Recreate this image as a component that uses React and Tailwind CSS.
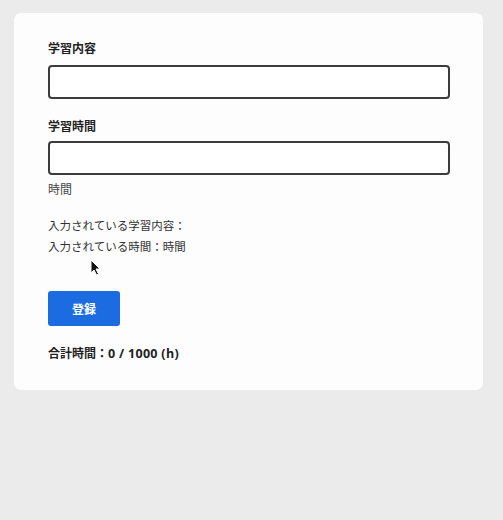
import React, { useState } from 'react';

const FONT = "font-['Noto_Sans_CJK_JP','Noto_Sans',sans-serif]";

function Cursor() {
    return (
        <svg className="absolute left-[90px] top-[259px]" width="12" height="17" viewBox="0 0 12 17">
            <path d="M1 1 L1 14 L4 11 L6.5 16 L8.5 15 L6 10 L10 10 Z" fill="#111" stroke="#fff" strokeWidth="1" />
        </svg>
    );
}

export default function App() {
    const [content, setContent] = useState('');
    const [time, setTime] = useState('');
    const [total] = useState(0);

    return (
        <div className={`relative min-h-[520px] bg-[#ebebeb] pl-[14px] pt-[13px] pr-[20px] ${FONT}`}>
            <div className="w-[469px] rounded-[7px] bg-[#fdfdfd] pl-[34px] pr-[33px] pt-[26px] pb-[27px] text-[#222]">
                <label className="block text-[12px] font-bold leading-[18px]">学習内容</label>
                <input
                    value={content}
                    onChange={e => setContent(e.target.value)}
                    className="mt-[8px] block h-[34px] w-full rounded-[4px] border-2 border-[#3c3c3c] bg-white px-2 text-[13px] outline-none"
                />
                <label className="mt-[18px] block text-[12px] font-bold leading-[18px]">学習時間</label>
                <input
                    value={time}
                    onChange={e => setTime(e.target.value)}
                    className="mt-[6px] block h-[34px] w-full rounded-[4px] border-2 border-[#3c3c3c] bg-white px-2 text-[13px] outline-none"
                />
                <div className="mt-[5px] text-[12px] leading-[18px] text-[#444]">時間</div>
                <div className="mt-[17px] text-[11.5px] leading-[21px] text-[#333]">
                    <div>入力されている学習内容：{content}</div>
                    <div>入力されている時間：{time}時間</div>
                </div>
                <button className="mt-[34px] block h-[35px] w-[72px] rounded-[3px] bg-[#1b6ce0] text-[12px] font-bold text-white">
                    登録
                </button>
                <div className="mt-[18px] text-[12px] font-bold leading-[18px] text-[#222]">
                    合計時間：<span className="font-['Open_Sans',sans-serif] text-[12.5px] tracking-[0.3px]">{total} / 1000 (h)</span>
                </div>
            </div>
            <Cursor />
        </div>
    );
}
